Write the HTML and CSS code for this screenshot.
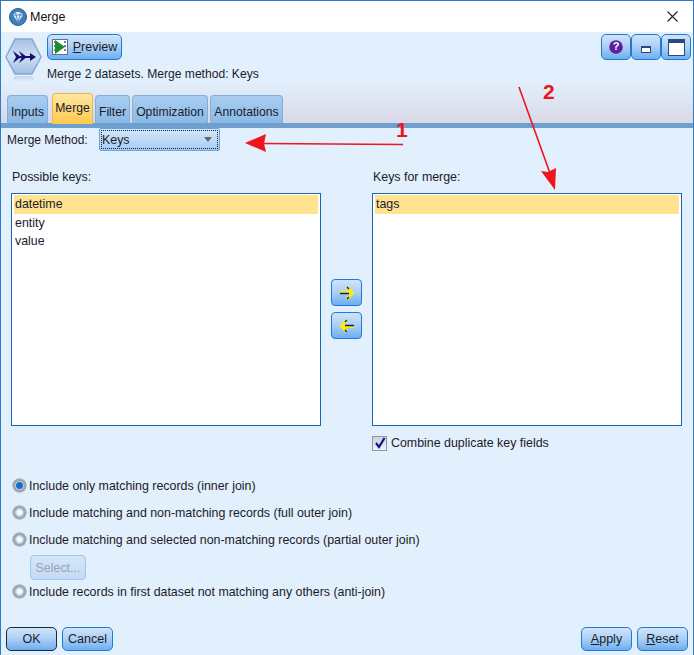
FILE: index.html
```html
<!DOCTYPE html>
<html lang="en">
<head>
<meta charset="utf-8">
<title>Merge</title>
<link rel="stylesheet" href="styles.css">
</head>
<body>
<div class="window">
  <div class="titlebar">
    <svg class="app-icon" width="18" height="18" viewBox="0 0 18 18"><circle cx="9" cy="9" r="8.5" fill="#3d7fb8"/><circle cx="9" cy="9" r="8.5" fill="none" stroke="#2a5f90"/><path d="M4 7 L6.5 4 H11.5 L14 7 L9 14.5 Z" fill="#e8f2fa"/><path d="M4 7 H14 M6.5 4 L7 7 L9 14.5 L11 7 L11.5 4" fill="none" stroke="#4a87bb" stroke-width="0.9"/></svg>
    <span class="title">Merge</span>
    <svg class="close" width="13" height="13" viewBox="0 0 13 13"><path d="M1.5 1.5 L11.5 11.5 M11.5 1.5 L1.5 11.5" stroke="#222" stroke-width="1.1"/></svg>
  </div>
  <div class="header">
    <div class="head-top">
      <svg class="node" width="38" height="50" viewBox="0 0 38 50"><defs><linearGradient id="ng" x1="0" y1="0" x2="0" y2="1"><stop offset="0" stop-color="#a3bfe4"/><stop offset="0.5" stop-color="#cfe0f5"/><stop offset="1" stop-color="#9fbde2"/></linearGradient><linearGradient id="nr" x1="0" y1="0" x2="0" y2="1"><stop offset="0" stop-color="#c4d6ec"/><stop offset="1" stop-color="#e2effc"/></linearGradient></defs><path d="M10 1 H27 L36 19 L27 36 H10 L1 19 Z" fill="url(#ng)" stroke="#85a7d3" stroke-width="1.4"/><path d="M10 38 H27 L31 44 H6 Z" fill="url(#nr)"/><path d="M8 13 L16 19 L8 25 L11 19 Z M14 13 L22 19 L14 25 L17 19 Z M15 18 H25 V15 L31 19 L25 23 V20 H15 Z" fill="#13136f"/></svg>
      <div class="head-main">
        <div class="head-row">
          <button class="btn preview" type="button">
            <svg width="16" height="16" viewBox="0 0 16 16"><rect x="0.5" y="0.5" width="15" height="15" fill="#fff" stroke="#5d6f8d"/><path d="M2 2 h2 v2 h-2 z M2 6 h2 v2 h-2 z M2 10 h2 v2 h-2 z M12 2 h2 v2 h-2 z M12 6 h2 v2 h-2 z M12 10 h2 v2 h-2 z" fill="#6d83a8"/><path d="M3 1 L13 8 L3 15 Z" fill="#1f8d2c"/></svg>
            <span><u>P</u>review</span>
          </button>
          <div class="win-btns">
            <button class="btn wb" type="button"><svg width="14" height="14" viewBox="0 0 14 14"><circle cx="7" cy="7" r="6.8" fill="#5e1f9e"/></svg><span class="q">?</span></button>
            <button class="btn wb" type="button"><span class="mini"></span></button>
            <button class="btn wb" type="button"><span class="maxi"></span></button>
          </div>
        </div>
        <div class="desc">Merge 2 datasets. Merge method: Keys</div>
      </div>
    </div>
    <div class="tabs">
      <div class="tab t1">Inputs</div>
      <div class="tab active">Merge</div>
      <div class="tab t3">Filter</div>
      <div class="tab t4">Optimization</div>
      <div class="tab t5">Annotations</div>
    </div>
  </div>
  <div class="bar"></div>
  <div class="body">
    <div class="method">
      <span class="method-label">Merge Method:</span>
      <div class="combo"><span class="combo-inner"><span>Keys</span><i class="caret"></i></span></div>
    </div>
    <div class="keys">
      <div class="col">
        <div class="col-label">Possible keys:</div>
        <div class="list">
          <div class="item sel">datetime</div>
          <div class="item">entity</div>
          <div class="item">value</div>
        </div>
      </div>
      <div class="movers">
        <button class="btn mover" type="button"><svg width="18" height="16" viewBox="0 0 18 16"><path d="M2 7.5 H13 M9 2 L14.5 8 L9 14" fill="none" stroke="#ffee00" stroke-width="2.8"/><path d="M2 8.5 H11 M9 2 L11 4 M9 14 L11 12" fill="none" stroke="#14147a" stroke-width="1.3"/></svg></button>
        <button class="btn mover" type="button"><svg width="18" height="16" viewBox="0 0 18 16"><path d="M16 8.5 H5 M9 2 L3.5 8 L9 14" fill="none" stroke="#ffee00" stroke-width="2.8"/><path d="M16 7.5 H7 M9 2 L7 4 M9 14 L7 12" fill="none" stroke="#14147a" stroke-width="1.3"/></svg></button>
      </div>
      <div class="col">
        <div class="col-label">Keys for merge:</div>
        <div class="list">
          <div class="item sel">tags</div>
        </div>
        <label class="check"><span class="box"><svg width="12" height="12" viewBox="0 0 12 12"><path d="M2 6 L5 10 L10.5 1" fill="none" stroke="#14148a" stroke-width="2.2"/></svg></span>Combine duplicate key fields</label>
      </div>
    </div>
    <div class="joins">
      <div class="radio on"><i class="dot"></i>Include only matching records (inner join)</div>
      <div class="radio"><i class="dot"></i>Include matching and non-matching records (full outer join)</div>
      <div class="radio"><i class="dot"></i>Include matching and selected non-matching records (partial outer join)</div>
      <button class="btn select" type="button">Select...</button>
      <div class="radio"><i class="dot"></i>Include records in first dataset not matching any others (anti-join)</div>
    </div>
    <div class="footer">
      <div class="group">
        <button class="btn act ok" type="button">OK</button>
        <button class="btn act" type="button">Cancel</button>
      </div>
      <div class="group">
        <button class="btn act" type="button"><span><u>A</u>pply</span></button>
        <button class="btn act" type="button"><span><u>R</u>eset</span></button>
      </div>
    </div>
  </div>
  <svg class="notes" width="694" height="655" viewBox="0 0 694 655">
    <path d="M262 143.5 L403 144.5 M519 87 L551 176" fill="none" stroke="#f0141c" stroke-width="1.6"/>
    <path d="M245 143 L266 134 L264 143.5 L266 152 Z" fill="#f0141c"/>
    <path d="M555 190 L541 171 L548 172 L556 168 Z" fill="#f0141c"/>
    <text x="396" y="137" class="note">1</text>
    <text x="543" y="99" class="note">2</text>
  </svg>
</div>
</body>
</html>
```
FILE: styles.css
```css
* { box-sizing: border-box; }
html, body { margin: 0; padding: 0; }
body { width: 694px; height: 655px; overflow: hidden; background: #e2effc; font-family: "Liberation Sans", Arial, sans-serif; font-size: 12.4px; color: #1b1b2a; }
.window { position: relative; width: 694px; height: 655px; display: flex; flex-direction: column; border: 1px solid #2c7cc9; border-bottom: 0; border-width: 1px 1px 0 1px; }
.titlebar { height: 31px; flex: none; background: #fff; display: flex; align-items: center; padding: 0 14px 0 8px; }
.app-icon { flex: none; }
.title { margin-left: 3px; font-size: 12.5px; color: #111; flex: 1; }
.close { flex: none; }
.header { height: 91px; flex: none; background: linear-gradient(#e2effc 0, #e2effc 55%, #d9d8e6 100%); display: flex; flex-direction: column; justify-content: space-between; }
.head-top { display: flex; padding: 2px 2px 0 4px; gap: 4px; }
.node { flex: none; margin-top: 4px; }
.head-main { flex: 1; }
.head-row { display: flex; justify-content: space-between; }
.btn { font: inherit; color: inherit; padding: 0; border: 1px solid #1c7bd6; border-radius: 4px; background: linear-gradient(#cfe3f9 0, #b0d2f6 45%, #6eaef0 100%); display: inline-flex; align-items: center; justify-content: center; }
.preview { width: 75px; height: 26px; gap: 5px; font-size: 12.5px; border-radius: 5px; }
.win-btns { display: flex; }
.wb { position: relative; width: 30px; height: 26px; border-radius: 5px; }
.q { position: absolute; left: 0; right: 0; top: 5px; text-align: center; color: #fff; font-weight: bold; font-size: 11px; }
.mini { display: block; width: 10px; height: 7px; margin-top: 5px; background: #fff; border: 1px solid #26497e; border-top-width: 2px; }
.maxi { display: block; width: 17px; height: 17px; background: #fff; border: 1px solid #26497e; border-top-width: 4px; }
.desc { margin-top: 7px; line-height: 14px; font-size: 12.1px; }
.tabs { display: flex; align-items: flex-end; padding-left: 6px; font-size: 12.2px; }
.tab { height: 28px; margin-right: 2px; padding-top: 9px; text-align: center; border: 1px solid #82aedb; border-bottom: 0; border-radius: 4px 4px 0 0; background: linear-gradient(#a9cdf2, #8ab9e6); line-height: 14px; }
.t1 { width: 41px; margin-right: 4px; }
.active { width: 41px; height: 31px; margin-right: 2px; padding-top: 7px; border-color: #e4b94f; background: linear-gradient(#ffe6a0, #ffc94f); position: relative; top: 1px; }
.t3 { width: 35px; }
.t4 { width: 76px; }
.t5 { width: 73px; margin-right: 0; }
.bar { height: 5px; flex: none; background: #6f9fce; }
.body { flex: 1; display: flex; flex-direction: column; background: #e2effc; }
.method { display: flex; align-items: center; height: 23px; padding-left: 6px; font-size: 12px; }
.method-label { width: 92px; }
.combo { width: 121px; height: 23px; padding: 1px; border: 1px solid #5ea6ea; border-radius: 2px; background: linear-gradient(#d5e7fa, #a8cdf4); font-size: 12.4px; }
.combo-inner { height: 100%; border: 1px dotted #222; display: flex; align-items: center; justify-content: space-between; padding: 0 5px 0 0; }
.caret { width: 0; height: 0; border-left: 4.5px solid transparent; border-right: 4.5px solid transparent; border-top: 5px solid #666; }
.keys { display: flex; margin-top: 19px; padding-left: 10px; }
.col { width: 310px; }
.col-label { line-height: 14px; padding-left: 1px; margin-bottom: 9px; }
.list { height: 233px; border: 1px solid #1768b8; background: #fff; padding: 1px 2px; }
.item { height: 18.5px; line-height: 18.5px; padding-left: 1px; }
.sel { background: #ffe38f; }
.movers { width: 51px; display: flex; flex-direction: column; align-items: center; padding-top: 109px; gap: 6px; }
.mover { width: 31px; height: 27px; border-radius: 4px; }
.check { display: flex; align-items: center; gap: 4px; margin-top: 9px; padding-left: 0; line-height: 16px; }
.box { width: 15px; height: 15px; background: linear-gradient(#cfd2dc, #f2f3f7); border: 1px solid #8e97a8; display: flex; align-items: center; justify-content: center; }
.joins { margin-top: 21px; padding-left: 12px; display: flex; flex-direction: column; align-items: flex-start; }
.radio { height: 27px; display: flex; align-items: center; gap: 3px; }
.dot { width: 13px; height: 13px; border-radius: 50%; background: radial-gradient(circle, #f6f9fc 0 2.5px, #b4d0ea 3.5px); border: 2px solid #9aa5ad; box-shadow: 0 0 0 .5px #7e858b; }
.on .dot { background: radial-gradient(circle, #1a6fc4 0 3px, #b4d0ea 4px); }
.select { margin: 2px 0 0 17px; width: 56px; height: 25px; color: #9aa4ae; background: linear-gradient(#d6e6f8, #c3daf4); border-color: #9ec6ee; }
.select + .radio { margin-top: -2px; }
.footer { margin-top: 22px; padding: 0 5px; display: flex; justify-content: space-between; }
.group { display: flex; gap: 5px; }
.act { width: 51px; height: 24px; font-size: 12.5px; border-radius: 5px; }
.ok { border-color: #1a2b40; }
.notes { position: absolute; left: -1px; top: -1px; pointer-events: none; }
.note { fill: #f0141c; font-family: "Liberation Sans", sans-serif; font-size: 21px; font-weight: bold; }
```
